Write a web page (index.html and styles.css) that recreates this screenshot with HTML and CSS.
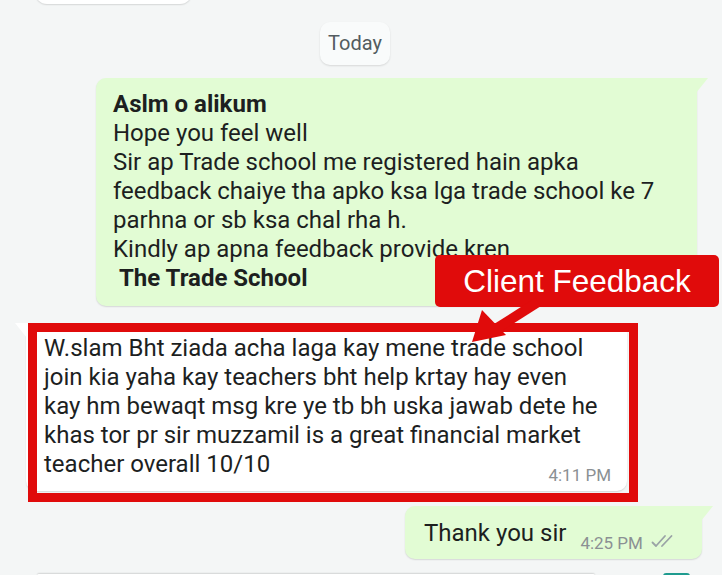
FILE: index.html
```html
<!DOCTYPE html>
<html lang="en">
<head>
<meta charset="utf-8">
<title>Chat</title>
<link rel="stylesheet" href="styles.css">
</head>
<body>
<div class="chat">
  <div class="row row-in"><div class="bubble prev"></div></div>

  <div class="date"><span class="date-pill">Today</span></div>

  <div class="row row-out">
    <div class="bubble bubble-out tail-out msg-long">
      <div class="text"><b>Aslm o alikum</b><br>Hope you feel well<br>Sir ap Trade school me registered hain apka<br>feedback chaiye tha apko ksa lga trade school ke 7<br>parhna or sb ksa chal rha h.<br>Kindly ap apna feedback provide kren<br><b>&nbsp;The Trade School</b></div>
    </div>
  </div>

  <div class="row row-in">
    <div class="bubble bubble-in tail-in msg-feedback">
      <div class="text">W.slam Bht ziada acha laga kay mene trade school<br>join kia yaha kay teachers bht help krtay hay even<br>kay hm bewaqt msg kre ye tb bh uska jawab dete he<br>khas tor pr sir muzzamil is a great financial market<br>teacher overall 10/10</div>
      <div class="meta meta-block">4:11 PM</div>
    </div>
  </div>

  <div class="row row-out row-last">
    <div class="bubble bubble-out tail-out msg-short">
      <span class="text">Thank you sir</span>
      <span class="meta meta-inline">4:25 PM
        <svg class="ticks" width="26" height="14" viewBox="0 0 26 14" aria-hidden="true">
          <path d="M1.5 8.5 L5 12 L14 2" fill="none" stroke="#9aa3a6" stroke-width="1.8" stroke-linecap="round" stroke-linejoin="round"/>
          <path d="M11 12 L20.5 2" fill="none" stroke="#9aa3a6" stroke-width="1.8" stroke-linecap="round"/>
        </svg>
      </span>
    </div>
  </div>

  <div class="composer">
    <div class="composer-input"></div>
    <div class="composer-send"></div>
  </div>

  <div class="highlight"></div>
  <div class="callout">Client Feedback</div>
  <svg class="arrow" width="80" height="50" viewBox="0 0 80 50" aria-hidden="true">
    <path d="M68 -2 L24 26" stroke="#e00b0b" stroke-width="10" fill="none"/>
    <polygon points="2,38 12,6 36,31" fill="#e00b0b"/>
  </svg>
</div>
</body>
</html>
```

FILE: styles.css
```css
* { box-sizing: border-box; }

html, body {
  margin: 0;
  padding: 0;
  background: #f4f6f6;
}

body {
  width: 722px;
  height: 575px;
  overflow: hidden;
  font-family: Roboto, "Noto Sans", sans-serif;
  color: #1d1f1f;
}

.chat {
  position: relative;
  display: flex;
  flex-direction: column;
  height: 575px;
  overflow: hidden;
}

.row {
  display: flex;
  flex-shrink: 0;
}

.row-in {
  justify-content: flex-start;
  padding-left: 26px;
}

.row-out {
  justify-content: flex-end;
  padding-right: 25px;
}

.bubble {
  position: relative;
  border-radius: 10px;
  box-shadow: 0 1px 1.5px rgba(0, 0, 0, 0.13);
}

.prev {
  width: 157px;
  height: 40px;
  margin-top: -36px;
  margin-left: 9px;
  background: #ffffff;
  border-radius: 12px;
}

.date {
  display: flex;
  justify-content: center;
  padding-right: 12px;
  margin-top: 18px;
  flex-shrink: 0;
}

.date-pill {
  display: block;
  width: 70px;
  height: 43px;
  line-height: 42px;
  text-align: center;
  font-size: 20px;
  color: #535c60;
  background: #f9fbfb;
  border-radius: 10px;
  box-shadow: 0 1px 2px rgba(0, 0, 0, 0.12);
}

.bubble-out {
  background: #e2fcd4;
}

.bubble-in {
  background: #ffffff;
}

.tail-out {
  border-top-right-radius: 0;
}

.tail-out::after {
  content: "";
  position: absolute;
  top: 0;
  right: -11px;
  width: 12px;
  height: 15px;
  background: inherit;
  clip-path: polygon(0 0, 100% 0, 0 100%);
}

.tail-in {
  border-top-left-radius: 0;
}

.tail-in::before {
  content: "";
  position: absolute;
  top: 0;
  left: -11px;
  width: 12px;
  height: 15px;
  background: inherit;
  clip-path: polygon(0 0, 100% 0, 100% 100%);
}

.text {
  font-size: 24px;
  line-height: 29px;
  white-space: nowrap;
}

.text b {
  font-weight: 700;
}

.msg-long {
  width: 601px;
  margin-top: 13px;
  padding: 12px 17px 13px 17px;
}

.msg-feedback {
  width: 601px;
  margin-top: 17px;
  padding: 11px 16px 8px 18px;
}

.meta {
  font-size: 17px;
  line-height: 16px;
  color: #8b9093;
}

.meta-block {
  text-align: right;
  margin-top: -12px;
}

.row-last {
  padding-right: 20px;
}

.msg-short {
  width: 297px;
  height: 53px;
  margin-top: 15px;
  padding: 13px 12px 11px 19px;
  display: flex;
  align-items: flex-end;
  gap: 14px;
}

.meta-inline {
  display: flex;
  align-items: center;
  gap: 8px;
  margin-bottom: -3px;
}

.ticks {
  display: block;
  margin-top: -4px;
}

.composer {
  display: flex;
  align-items: flex-start;
  margin-top: 15px;
  padding-left: 37px;
  padding-right: 32px;
  gap: 68px;
  flex-shrink: 0;
  height: 2px;
}

.composer-input {
  width: 558px;
  height: 2px;
  background: #ffffff;
  border-radius: 2px 2px 0 0;
  box-shadow: 0 -1px 1.5px rgba(0, 0, 0, 0.14);
}

.composer-send {
  width: 27px;
  height: 3px;
  margin-top: -1px;
  border-radius: 14px 14px 0 0;
  background: #1f9b8f;
}

.highlight {
  position: absolute;
  left: 28px;
  top: 323px;
  width: 610px;
  height: 179px;
  border: 9px solid #e00b0b;
}

.callout {
  position: absolute;
  left: 435px;
  top: 255px;
  width: 284px;
  height: 52px;
  border-radius: 5px;
  background: #e00b0b;
  color: #ffffff;
  font-family: "Liberation Sans", Arial, sans-serif;
  font-size: 31.5px;
  line-height: 52px;
  text-align: center;
}

.arrow {
  position: absolute;
  left: 470px;
  top: 304px;
  overflow: visible;
}
```
